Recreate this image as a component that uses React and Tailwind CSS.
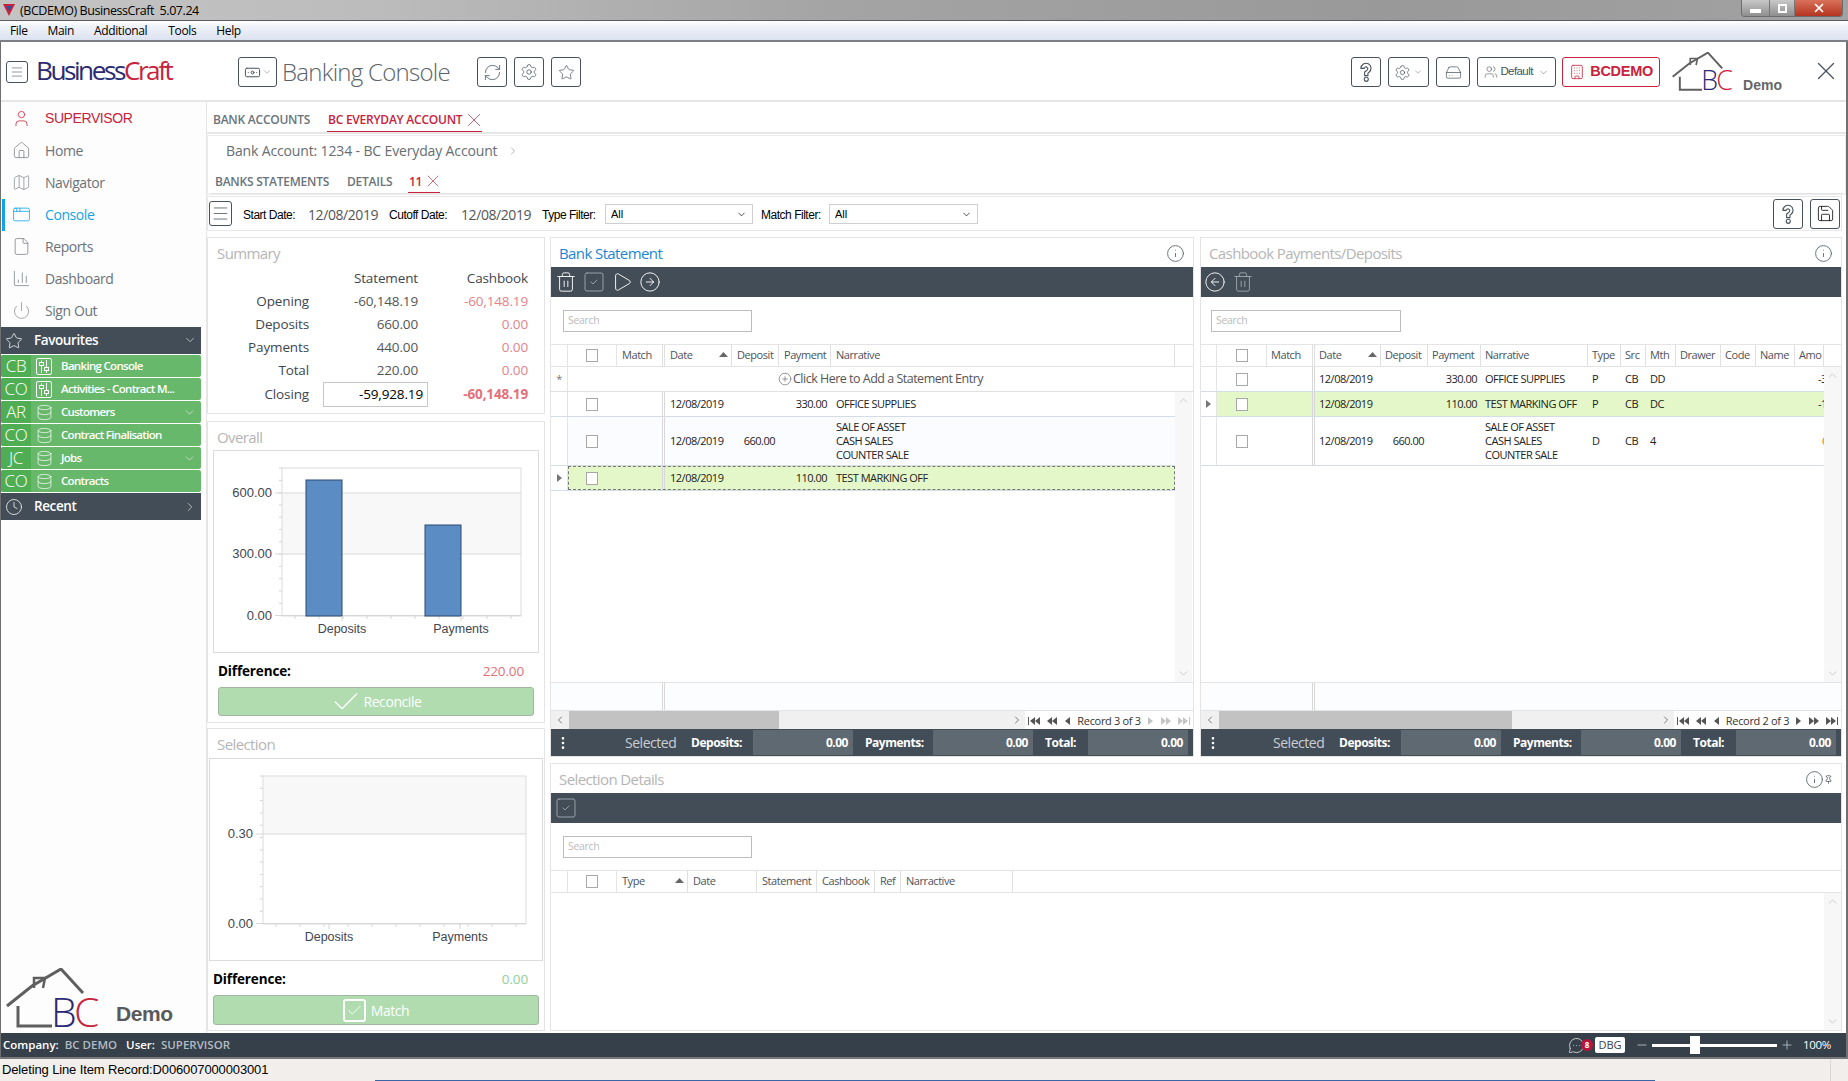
import React from 'react';
import { User, Home, Map, AppWindow, File, ChartColumn, Power, Star, Clock, Database, ChevronDown, ChevronRight, ChevronLeft, ChevronUp, RefreshCw, Settings, Users, Building, HardDrive, Save, X, Info, Trash2, SquareCheck, Play, CircleArrowRight, CircleArrowLeft, Pin, Check, Menu, Banknote, CirclePlus, MessageCircleMore, Plus, Minus, EllipsisVertical } from 'lucide-react';

const QMark = ({ c = 'w-[22px] h-[22px]' }) => (
  <svg viewBox="0 0 24 24" className={c} fill="none" stroke="#47525c" strokeWidth="1.2">
    <path d="M6.5 8a5.5 5.5 0 1 1 8.6 4.5l-1 .8V16h-3.6v-4l2.2-1.7A2 2 0 1 0 10 8z" />
    <circle cx="12.3" cy="20" r="2.2" />
  </svg>
);

const Sliders = () => (
  <svg width="12" height="13" viewBox="0 0 12 13" fill="none" stroke="currentColor" strokeWidth="1">
    <path d="M3.5 0.5V13M8.5 0V13" />
    <rect x="1.5" y="2.5" width="4" height="3" fill="#68b86b" />
    <rect x="6.5" y="7.5" width="4" height="3" fill="#68b86b" />
  </svg>
);

function Logo({ w, h, cn = '' }) {
  return (
    <svg width={w} height={h} viewBox="0 0 92 72" fill="none" className={cn}>
      <path d="M1 38 L26 18 L55 1 L77 25" stroke="#5f5f5f" strokeWidth="3" fill="none" />
      <path d="M28 20 V10 H39 L37 20" stroke="#5f5f5f" strokeWidth="2.5" fill="none" />
      <path d="M12 38 V58 H46" stroke="#5f5f5f" strokeWidth="3" fill="none" />
      <text x="45" y="59" fontFamily="Open Sans" fontWeight="300" fontSize="41" fill="#2c2a72">B</text>
      <text x="68" y="59" fontFamily="Open Sans" fontWeight="300" fontSize="41" fill="#c8233c">C</text>
    </svg>
  );
}

const side = [
  [User, 'SUPERVISOR', 'text-[#c8233c] font-[\'Liberation_Sans\'] tracking-[-0.02em]', 'text-[#c8233c]'],
  [Home, 'Home', 'text-[#6b7278]', 'text-[#7c8287]'],
  [Map, 'Navigator', 'text-[#6b7278]', 'text-[#8c9196]'],
  [AppWindow, 'Console', 'text-[#10a5ea]', 'text-[#10a5ea]'],
  [File, 'Reports', 'text-[#6b7278]', 'text-[#7c8287]'],
  [ChartColumn, 'Dashboard', 'text-[#6b7278]', 'text-[#7c8287]'],
  [Power, 'Sign Out', 'text-[#6b7278]', 'text-[#8c9196]'],
];

const favs = [
  ['CB', null, 'Banking Console', false],
  ['CO', null, 'Activities - Contract M...', false],
  ['AR', Database, 'Customers', true],
  ['CO', Database, 'Contract Finalisation', false],
  ['JC', Database, 'Jobs', true],
  ['CO', Database, 'Contracts', false],
];

function Sidebar() {
  return (
    <aside className="w-[205px] shrink-0 flex flex-col bg-[#fdfdfe] pt-px">
      {side.map(([I, t, tc, ic]) => (
        <div key={t} className="h-[32px] pb-[2px] flex items-center relative">
          {t === 'Console' && <div className="absolute left-[1px] top-0 bottom-0 w-[3px] bg-[#10a5ea]" />}
          <div className="w-[40px] flex justify-center"><I size={19} strokeWidth={1} className={ic} /></div>
          <span className={`ml-[4px] text-[14px] tracking-[-0.03em] ${tc}`}>{t}</span>
        </div>
      ))}
      <div className="w-[200px] h-[27px] bg-[#434d58] flex items-center text-white">
        <div className="w-[26px] flex justify-center"><Star size={18} strokeWidth={1} /></div>
        <span className="ml-[7px] text-[13.5px] font-semibold tracking-[-0.03em] flex-1">Favourites</span>
        <ChevronDown size={14} strokeWidth={1} className="mr-[4px] mb-[2px]" />
      </div>
      {favs.map(([code, I, t, chev], i) => (
        <div key={i} className="w-[200px] h-[22px] mt-px flex items-center bg-[#68b86b] rounded-[2px] text-white overflow-hidden">
          <div className="w-[30px] h-full bg-[#4fae53] flex items-center justify-center text-[17px] font-light tracking-[-0.02em]">{code}</div>
          <div className="w-[26px] flex justify-center">
            {I ? <I size={17} strokeWidth={1} /> : <div className="w-[16px] h-[17px] border border-white rounded-[2px] flex items-center justify-center"><Sliders /></div>}
          </div>
          <span className="ml-[4px] text-[11.5px] font-semibold tracking-[-0.06em] flex-1 whitespace-nowrap">{t}</span>
          {chev && <ChevronDown size={13} strokeWidth={1} className="mr-[5px]" />}
        </div>
      ))}
      <div className="w-[200px] h-[27px] mt-px bg-[#434d58] flex items-center text-white">
        <div className="w-[26px] flex justify-center"><Clock size={18} strokeWidth={1} /></div>
        <span className="ml-[7px] text-[13.5px] font-semibold tracking-[-0.03em] flex-1">Recent</span>
        <ChevronRight size={14} strokeWidth={1} className="mr-[4px]" />
      </div>
      <div className="mt-auto mb-[5px] ml-[5px] flex items-end">
        <Logo w={92} h={72} cn="mb-[-12px]" />
        <span className="ml-[18px] mb-[-1px] text-[21px] font-bold text-[#5a5a5a] tracking-[-0.02em] font-['Liberation_Sans']">Demo</span>
      </div>
    </aside>
  );
}

const Btn = ({ w, red, children, cn = '' }) => (
  <div className={`h-[30px] ${w} border ${red ? 'border-[#c8233c]' : 'border-[#47525c]'} rounded-[3px] flex items-center justify-center shrink-0 ${cn}`}>{children}</div>
);

function Header() {
  return (
    <div className="h-[60px] pt-[2px] flex items-center border-b-2 border-[#e6e6e6] shrink-0 text-[#47525c]">
      <div className="ml-[5px] w-[22px] h-[22px] border border-[#47525c] rounded-[3px] flex items-center justify-center"><Menu size={14} strokeWidth={1} /></div>
      <div className="ml-[8px] w-[138px] text-[26.2px] leading-none tracking-[-0.095em] whitespace-nowrap mb-[3px]">
        <span className="text-[#2c2a72]">Business</span><span className="text-[#c8233c]">Craft</span>
      </div>
      <Btn w="w-[39px] ml-[64px] gap-[1px]">
        <Banknote size={17} strokeWidth={1.4} /><ChevronDown size={10} strokeWidth={1} />
      </Btn>
      <div className="ml-[5px] w-[170px] text-[24px] font-light text-[#5b6369] tracking-[-0.03em] whitespace-nowrap mb-[1px]">Banking Console</div>
      <Btn w="w-[30px] ml-[25px]"><RefreshCw size={19} strokeWidth={1} /></Btn>
      <Btn w="w-[30px] ml-[7px]"><Settings size={18} strokeWidth={1} /></Btn>
      <Btn w="w-[30px] ml-[7px]"><Star size={17} strokeWidth={1} /></Btn>
      <Btn w="w-[30px] ml-auto"><QMark /></Btn>
      <Btn w="w-[41px] ml-[7px] gap-[2px]"><Settings size={17} strokeWidth={1} /><ChevronDown size={10} strokeWidth={1} /></Btn>
      <Btn w="w-[34px] ml-[7px]"><HardDrive size={17} strokeWidth={1} /></Btn>
      <Btn w="w-[79px] ml-[7px] gap-[2px]"><Users size={14} strokeWidth={1} /><span className="text-[11.5px] tracking-[-0.05em] font-['Liberation_Sans']">Default</span><ChevronDown size={11} strokeWidth={1} className="ml-[3px]" /></Btn>
      <Btn red w="w-[98px] ml-[6px] gap-[5px] text-[#c8233c]"><Building size={16} strokeWidth={1.2} /><span className="text-[14.5px] font-bold tracking-[-0.02em] font-['Liberation_Sans']">BCDEMO</span></Btn>
      <div className="ml-[12px] mb-[1px] flex items-end">
        <Logo w={60} h={47} cn="mb-[-8px]" />
        <span className="ml-[11px] mb-[-5px] text-[14px] font-bold text-[#666] font-['Liberation_Sans']">Demo</span>
      </div>
      <X size={30} strokeWidth={1} className="ml-[29px] mr-[5px] mb-[2px] text-[#47525c]" />
    </div>
  );
}

const Sel = ({ w }) => (
  <div className={`${w} h-[20px] border border-[#cfcfcf] flex items-center pl-[5px] text-[11px] text-black font-['Liberation_Sans']`}>
    <span className="flex-1">All</span><ChevronDown size={11} strokeWidth={1.5} className="mr-[5px]" />
  </div>
);

function TopStrips() {
  return (
    <>
      <div className="h-[32px] border-b-2 border-[#e6e6e6] flex items-end shrink-0 pl-[6px] text-[12px] font-semibold tracking-[-0.02em] font-['Open_Sans']">
        <span className="h-[29px] w-[98px] leading-[34px] text-[#6a737b] whitespace-nowrap">BANK ACCOUNTS</span>
        <span className="h-[29px] ml-[16px] pl-[1px] w-[155px] border-b border-[#c8233c] flex items-start text-[#c8233c] whitespace-nowrap">
          <span className="leading-[34px] w-[135px] whitespace-nowrap">BC EVERYDAY ACCOUNT</span><X size={22} strokeWidth={0.8} className="ml-[1px] mt-[6px] shrink-0" />
        </span>
      </div>
      <div className="h-[60px] mt-px border border-[#ececec] shrink-0 flex flex-col">
        <div className="h-[29px] flex items-center pl-[18px] text-[14px] text-[#666d73] tracking-[-0.01em] whitespace-nowrap">
          Bank Account: 1234 - BC Everyday Account<ChevronRight size={12} strokeWidth={1} className="ml-[10px]" />
        </div>
        <div className="mx-[2px] flex-1 border-b border-[#e4e4e4] flex items-end pl-[5px] text-[12px] font-semibold tracking-[-0.02em]">
          <span className="h-[27px] leading-[31px] w-[115px] whitespace-nowrap text-[#6a737b]">BANKS STATEMENTS</span>
          <span className="h-[27px] leading-[31px] w-[45px] text-[#6a737b] ml-[17px]">DETAILS</span>
          <span className="h-[27px] ml-[16px] w-[32px] border-b border-[#c8233c] flex text-[#c8233c]">
            <span className="leading-[31px] ml-[1px]">11</span><X size={20} strokeWidth={0.8} className="ml-[1px] mt-[5px] shrink-0" />
          </span>
        </div>
      </div>
      <div className="h-[35px] mt-px mr-[4px] border border-[#e8e8e8] shrink-0 flex items-center">
        <div className="ml-[1px] w-[23px] h-[25px] border border-[#47525c] rounded-[3px] flex items-center justify-center text-[#47525c]"><Menu size={19} strokeWidth={1} /></div>
        <span className="ml-[11px] mt-[2px] w-[52px] text-[12px] tracking-[-0.04em] font-['Liberation_Sans'] text-black whitespace-nowrap">Start Date:</span>
        <span className="ml-[13px] mt-[2px] w-[71px] text-[14px] tracking-[-0.03em] text-[#555] whitespace-nowrap">12/08/2019</span>
        <span className="ml-[10px] mt-[2px] w-[58px] text-[12px] tracking-[-0.04em] font-['Liberation_Sans'] text-black whitespace-nowrap">Cutoff Date:</span>
        <span className="ml-[14px] mt-[2px] w-[71px] text-[14px] tracking-[-0.03em] text-[#555] whitespace-nowrap">12/08/2019</span>
        <span className="ml-[10px] mt-[2px] w-[54px] text-[12px] tracking-[-0.04em] font-['Liberation_Sans'] text-black whitespace-nowrap">Type Filter:</span>
        <div className="ml-[9px] mt-px"><Sel w="w-[148px]" /></div>
        <span className="ml-[8px] mt-[2px] w-[59px] text-[12px] tracking-[-0.04em] font-['Liberation_Sans'] text-black whitespace-nowrap">Match Filter:</span>
        <div className="ml-[9px] mt-px"><Sel w="w-[149px]" /></div>
        <div className="ml-auto mr-[1px] flex gap-[7px]">
          <Btn w="w-[30px]"><QMark /></Btn>
          <Btn w="w-[30px]"><Save size={19} strokeWidth={1} /></Btn>
        </div>
      </div>
    </>
  );
}

function ChartBox({ plotL, plotR, bars, labels, lines, cn, w }) {
  const T = 17, B = 165;
  const ticks = [];
  for (let y = T; y < B; y += 12.3) ticks.push(y);
  const bt = [];
  for (let x = plotL + 13; x < plotR; x += 24) bt.push(x);
  return (
    <div className={cn}>
      <svg width={w} height="201" fontFamily="Liberation Sans" fontSize="12.5" fill="#3f4650">
        {bars && <rect x={plotL} y={lines[0].y} width={plotR - plotL} height={lines[1].y - lines[0].y} fill="#f8f8f8" />}
        {!bars && <rect x={plotL} y={T} width={plotR - plotL} height={lines[0].y - T} fill="#f8f8f8" />}
        <rect x={plotL} y={T} width={plotR - plotL} height={B - T} fill="none" stroke="#dcdcdc" />
        {ticks.map((y, i) => <line key={i} x1={plotL - 3} x2={plotL} y1={y} y2={y} stroke="#d4d4d4" />)}
        {bt.map((x, i) => <line key={i} x1={x} x2={x} y1={B} y2={B + 3} stroke="#d4d4d4" />)}
        {lines.map((l) => (
          <g key={l.t}>
            <line x1={plotL - 7} x2={plotR} y1={l.y} y2={l.y} stroke="#d8d8d8" />
            <text x={plotL - 10} y={l.y + 4} textAnchor="end" fontSize="13">{l.t}</text>
          </g>
        ))}
        {bars && bars.map((b) => <rect key={b.x} x={b.x} y={b.y} width="36" height={B - b.y} fill="#5b8cc4" stroke="#2a4a72" strokeWidth="1" />)}
        {labels.map((l) => (
          <g key={l.t}>
            <line x1={l.x} x2={l.x} y1={B} y2={B + 5} stroke="#d4d4d4" />
            <text x={l.x} y={B + 17} textAnchor="middle">{l.t}</text>
          </g>
        ))}
      </svg>
    </div>
  );
}

const sumRows = [
  ['Opening', '-60,148.19', '-60,148.19'],
  ['Deposits', '660.00', '0.00'],
  ['Payments', '440.00', '0.00'],
  ['Total', '220.00', '0.00'],
];

function LeftColumn() {
  return (
    <div className="w-[338px] shrink-0 flex flex-col text-[#3e464d]">
      <div className="h-[177px] border border-[#e4e4e4] bg-white">
        <div className="h-[29px] pt-[2px] pl-[9px] flex items-center text-[15px] text-[#b5b5b5] tracking-[-0.04em]">Summary</div>
        <div className="grid grid-cols-[101px_109px_110px] grid-rows-[23px_23px_23px_23px_23px_25px] text-[13.5px] tracking-[-0.01em] items-center text-right">
          <span />
          <span className="font-medium">Statement</span>
          <span className="font-medium">Cashbook</span>
          {sumRows.map((r) => (
            <React.Fragment key={r[0]}>
              <span className="font-medium">{r[0]}</span>
              <span className="text-[#555]">{r[1]}</span>
              <span className="text-[#e4838b]">{r[2]}</span>
            </React.Fragment>
          ))}
          <span className="font-medium">Closing</span>
          <span className="ml-[14px] mr-[-10px] h-[25px] border border-[#c8c8c8] pr-[4px] flex items-center justify-end text-black font-medium">-59,928.19</span>
          <span className="font-bold text-[#e4707a]">-60,148.19</span>
        </div>
      </div>
      <div className="h-[302px] mt-[7px] border border-[#e4e4e4] bg-white flex flex-col">
        <div className="h-[28px] pt-[2px] pl-[9px] flex items-center text-[15px] text-[#b5b5b5] tracking-[-0.04em]">Overall</div>
        <ChartBox cn="mx-[5px] h-[203px] border border-[#dcdcdc]" w={324} plotL={68} plotR={307}
          bars={[{ x: 92, y: 29 }, { x: 211, y: 74 }]}
          lines={[{ y: 42, t: '600.00' }, { y: 103, t: '300.00' }, { y: 164.5, t: '0.00' }]}
          labels={[{ x: 128, t: 'Deposits' }, { x: 247, t: 'Payments' }]} />
        <div className="h-[34px] pt-[3px] flex items-center pl-[10px] pr-[20px] justify-between text-[13.5px] tracking-[-0.01em]">
          <span className="font-bold text-black">Difference:</span><span className="text-[#e4707a] font-medium">220.00</span>
        </div>
        <div className="mx-[10px] h-[29px] bg-[#b0dcb0] border border-[#a3b5a3] rounded-[3px] flex items-center justify-center text-white text-[14px] gap-[1px] tracking-[-0.03em]">
          <Check size={32} strokeWidth={1} />Reconcile
        </div>
      </div>
      <div className="h-[303px] mt-[5px] border border-[#e4e4e4] bg-white flex flex-col">
        <div className="h-[29px] pt-[2px] pl-[9px] flex items-center text-[15px] text-[#b5b5b5] tracking-[-0.04em]">Selection</div>
        <ChartBox cn="mx-[1px] h-[203px] border-y border-x border-[#dcdcdc]" w={334} plotL={53} plotR={316}
          lines={[{ y: 75, t: '0.30' }, { y: 164.5, t: '0.00' }]}
          labels={[{ x: 119, t: 'Deposits' }, { x: 250, t: 'Payments' }]} />
        <div className="h-[34px] pt-[3px] flex items-center pl-[5px] pr-[16px] justify-between text-[13.5px] tracking-[-0.01em]">
          <span className="font-bold text-black">Difference:</span><span className="text-[#8fd096] font-medium">0.00</span>
        </div>
        <div className="ml-[5px] w-[326px] h-[30px] bg-[#b0dcb0] border border-[#a3b5a3] rounded-[3px] flex items-center justify-center text-white text-[14px] gap-[5px] tracking-[-0.03em]">
          <div className="w-[23px] h-[23px] border-2 border-white rounded-[3px] flex items-center justify-center"><Check size={17} strokeWidth={1.3} /></div>Match
        </div>
      </div>
    </div>
  );
}

const Box = () => <div className="w-[12px] h-[13px] border border-[#a8a8a8] bg-white" />;

const Tri = ({ dir = 'r', c = '#555' }) => (
  <svg width="5" height="8" viewBox="0 0 5 8"><path d={dir === 'r' ? 'M0 0 L5 4 L0 8z' : 'M5 0 L0 4 L5 8z'} fill={c} /></svg>
);

function Pager({ text, dim }) {
  const a = '#555';
  const b = dim ? '#c4c4c4' : '#555';
  return (
    <div className="flex-1 h-full pt-[2px] bg-white flex items-center justify-between px-[3px] text-[11px] tracking-[-0.03em] text-[#333]">
      <span className="flex items-center"><span className="w-px h-[8px] mr-px bg-[#555]" /><Tri dir="l" c={a} /><Tri dir="l" c={a} /></span>
      <span className="flex items-center"><Tri dir="l" c={a} /><Tri dir="l" c={a} /></span>
      <Tri dir="l" c={a} />
      <span className="whitespace-nowrap">{text}</span>
      <Tri c={b} />
      <span className="flex items-center"><Tri c={b} /><Tri c={b} /></span>
      <span className="flex items-center"><Tri c={b} /><Tri c={b} /><span className="w-px h-[8px] ml-px" style={{ background: b }} /></span>
    </div>
  );
}

function SelectedBar({ cols }) {
  return (
    <div className="h-[27px] bg-[#434d58] flex items-center text-white text-[12px] font-bold tracking-[-0.04em] shrink-0">
      <EllipsisVertical size={16} strokeWidth={2} className="ml-[4px] w-[16px]" />
      <span className={`${cols.sel} text-[14px] font-normal text-[#c9ced2] whitespace-nowrap`}>Selected</span>
      <span className={cols.d}>Deposits:</span>
      <div className={`${cols.b1} h-[25px] bg-[#5f6971] flex items-center justify-end pr-[5px]`}>0.00</div>
      <span className={cols.p}>Payments:</span>
      <div className={`${cols.b2} h-[25px] bg-[#5f6971] flex items-center justify-end pr-[5px]`}>0.00</div>
      <span className={cols.t}>Total:</span>
      <div className={`${cols.b3} h-[25px] bg-[#5f6971] flex items-center justify-end pr-[5px]`}>0.00</div>
    </div>
  );
}

const Title = ({ children, blue, pin }) => (
  <div className="h-[29px] pt-[2px] shrink-0 flex items-center pl-[8px] pr-[8px] justify-between">
    <span className={`text-[15px] tracking-[-0.04em] ${blue ? 'text-[#1c86d6]' : 'text-[#b5b5b5]'}`}>{children}</span>
    <span className="flex items-center text-[#47525c]"><Info size={19} strokeWidth={1} />{pin && <Pin size={9} strokeWidth={2} />}</span>
  </div>
);

const bankCols = [
  { w: 'w-[48px]', t: 'Match', db: true },
  { w: 'w-[67px]', t: 'Date', sort: true },
  { w: 'w-[47px]', t: 'Deposit', right: true },
  { w: 'w-[52px]', t: 'Payment', right: true },
  { w: 'w-[344px]', t: 'Narrative' },
];
const cashCols = [
  { w: 'w-[48px]', t: 'Match', db: true },
  { w: 'w-[66px]', t: 'Date', sort: true },
  { w: 'w-[47px]', t: 'Deposit', right: true },
  { w: 'w-[53px]', t: 'Payment', right: true },
  { w: 'w-[107px]', t: 'Narrative' },
  { w: 'w-[33px]', t: 'Type' },
  { w: 'w-[25px]', t: 'Src' },
  { w: 'w-[30px]', t: 'Mth' },
  { w: 'w-[45px]', t: 'Drawer' },
  { w: 'w-[35px]', t: 'Code' },
  { w: 'w-[39px]', t: 'Name' },
  { w: 'w-[29px]', t: 'Amo', amo: true },
];
const detCols = [
  { w: 'w-[71px]', t: 'Type', sort: true },
  { w: 'w-[69px]', t: 'Date' },
  { w: 'w-[60px]', t: 'Statement' },
  { w: 'w-[58px]', t: 'Cashbook' },
  { w: 'w-[26px]', t: 'Ref' },
  { w: 'w-[112px]', t: 'Narractive' },
];

function HeadRow({ cols, ind = 'w-[17px]', chk = 'w-[49px]', pl = 'pl-[5px]' }) {
  return (
    <div className="h-[23px] shrink-0 flex border-y border-[#e4e4e4] text-[11px] tracking-[-0.04em] text-[#4c5359]">
      <div className={`${ind} border-r border-[#e4e4e4]`} />
      <div className={`${chk} border-r border-[#e4e4e4] flex items-center justify-center`}><Box /></div>
      {cols.map((c) => (
        <div key={c.t} className={`${c.w} shrink-0 overflow-hidden whitespace-nowrap flex items-center ${pl} ${c.db ? 'border-r-[3px] border-double' : 'border-r'} border-[#e0e0e0]`}>
          <span className="flex-1">{c.t}</span>
          {c.sort && <svg width="9" height="5" viewBox="0 0 9 5" className="mr-[3px] mb-[3px]"><path d="M0 5 L4.5 0 L9 5z" fill="#666" /></svg>}
        </div>
      ))}
    </div>
  );
}

function DataRow({ cols, vals, h, active, outline, alt, ind = 'w-[17px]', chk = 'w-[49px]', pl = 'pl-[5px]' }) {
  return (
    <div className={`${h} shrink-0 flex border-b border-[#d4dde6] text-[11px] tracking-[-0.045em] text-[#222] ${active ? 'bg-[#e4f7c8]' : alt ? 'bg-[#fbfcff]' : 'bg-white'}`}>
      <div className={`${ind} border-r border-[#e4e4e4] bg-white flex items-center justify-center`}>{(active || outline) && <Tri c="#777" />}</div>
      <div className={`flex flex-1 min-w-0 ${outline ? 'outline-1 outline-dashed outline-[#777] -outline-offset-1' : ''}`}>
        <div className={`${chk} border-r border-transparent flex items-center justify-center`}><Box /></div>
        {cols.map((c, i) => (
          <div key={c.t} className={`${c.w} shrink-0 overflow-hidden whitespace-nowrap flex items-center ${c.right ? 'justify-end pr-[4px]' : pl} ${c.db ? 'border-r-[3px] border-double border-[#d8d8d8]' : ''}`}>
            {c.amo ? <span className={`${vals[i] === '6' ? 'pl-[23px] text-orange-500' : 'pl-[19px]'}`}>{vals[i]}</span> : Array.isArray(vals[i]) ? <div className="leading-[14px]">{vals[i].map((l) => <div key={l}>{l}</div>)}</div> : vals[i]}
          </div>
        ))}
      </div>
    </div>
  );
}

const Scroll = ({ cn = '' }) => (
  <div className={`w-[17px] shrink-0 bg-[#f7f7f7] flex flex-col items-center justify-between py-[2px] text-[#c4c4c4] ${cn}`}>
    <ChevronUp size={13} strokeWidth={1.5} /><ChevronDown size={13} strokeWidth={1.5} />
  </div>
);

const Search = ({ w, pl = 'pl-[12px]' }) => (
  <div className={`h-[47px] pt-px shrink-0 flex items-center ${pl}`}>
    <div className={`${w} h-[22px] border border-[#bdbdbd] pl-[4px] flex items-center text-[10.5px] text-[#bbb] tracking-[-0.03em]`}>Search</div>
  </div>
);

const sale = ['SALE OF ASSET', 'CASH SALES', 'COUNTER SALE'];

function Footer({ ind, chk }) {
  return (
    <div className="h-[29px] shrink-0 flex border-y border-[#e4e4e4] bg-[#fcfdff]">
      <div className={ind} /><div className={chk} />
      <div className="w-[48px] border-r-[3px] border-double border-[#d8d8d8]" />
    </div>
  );
}

const barCols = (ml) => ({ sel: `${ml} w-[66px]`, d: 'w-[62px]', b1: 'w-[100px]', p: 'ml-[12px] w-[68px]', b2: 'w-[100px]', t: 'ml-[12px] w-[43px]', b3: 'w-[100px]' });

function BankPanel() {
  return (
    <div className="w-[644px] shrink-0 border border-[#e4e4e4] bg-white flex flex-col">
      <Title blue>Bank Statement</Title>
      <div className="h-[30px] shrink-0 bg-[#434d58] flex items-center pl-[4px] text-white">
        <Trash2 size={22} strokeWidth={1} /><SquareCheck size={24} strokeWidth={0.9} className="ml-[5px] text-[#a0a8ae]" /><Play size={22} strokeWidth={1} className="ml-[5px]" /><CircleArrowRight size={22} strokeWidth={1} className="ml-[6px]" />
      </div>
      <Search w="w-[189px]" />
      <HeadRow cols={bankCols} />
      <div className="h-[25px] shrink-0 flex border-b border-[#e0e0e0] text-[12.5px] tracking-[-0.04em] text-[#555]">
        <div className="w-[17px] border-r border-[#e4e4e4] flex items-center justify-center text-[11px] text-[#777]">*</div>
        <div className="flex-1 flex items-center justify-center gap-[1px]"><CirclePlus size={14} strokeWidth={1} />Click Here to Add a Statement Entry</div>
      </div>
      <div className="flex-1 flex min-h-0">
        <div className="flex-1 min-w-0 flex flex-col">
          <DataRow h="h-[25px]" cols={bankCols} vals={['', '12/08/2019', '', '330.00', 'OFFICE SUPPLIES']} />
          <DataRow h="h-[49px]" alt cols={bankCols} vals={['', '12/08/2019', '660.00', '', sale]} />
          <DataRow h="h-[25px]" outline active cols={bankCols} vals={['', '12/08/2019', '', '110.00', 'TEST MARKING OFF']} />
        </div>
        <Scroll cn="mr-[1px]" />
      </div>
      <Footer ind="w-[17px]" chk="w-[49px]" />
      <div className="h-[18px] shrink-0 flex items-center bg-[#f0f0f0]">
        <ChevronLeft size={12} strokeWidth={1.5} className="w-[18px] text-[#555]" />
        <div className="w-[210px] h-full bg-[#c2c2c2]" />
        <div className="w-[246px] flex justify-end pr-[2px]"><ChevronRight size={12} strokeWidth={1.5} className="text-[#555]" /></div>
        <Pager text="Record 3 of 3" dim />
      </div>
      <SelectedBar cols={barCols('ml-[54px]')} />
    </div>
  );
}

function CashPanel() {
  const o = { ind: 'w-[16px]', chk: 'w-[50px]', pl: 'pl-[4px]' };
  return (
    <div className="w-[642px] shrink-0 ml-[6px] border border-[#e4e4e4] bg-white flex flex-col">
      <Title>Cashbook Payments/Deposits</Title>
      <div className="h-[30px] shrink-0 bg-[#434d58] flex items-center pl-[3px] text-white">
        <CircleArrowLeft size={22} strokeWidth={1} /><Trash2 size={22} strokeWidth={1} className="ml-[6px] text-[#a0a8ae]" />
      </div>
      <Search w="w-[190px]" pl="pl-[10px]" />
      <HeadRow cols={cashCols} {...o} />
      <div className="flex-1 flex min-h-0">
        <div className="flex-1 min-w-0 flex flex-col">
          <DataRow h="h-[25px]" {...o} cols={cashCols} vals={['', '12/08/2019', '', '330.00', 'OFFICE SUPPLIES', 'P', 'CB', 'DD', '', '', '', '-330']} />
          <DataRow h="h-[25px]" {...o} active cols={cashCols} vals={['', '12/08/2019', '', '110.00', 'TEST MARKING OFF', 'P', 'CB', 'DC', '', '', '', '-110']} />
          <DataRow h="h-[49px]" {...o} cols={cashCols} vals={['', '12/08/2019', '660.00', '', sale, 'D', 'CB', '4', '', '', '', '6']} />
        </div>
        <Scroll />
      </div>
      <Footer ind={o.ind} chk={o.chk} />
      <div className="h-[18px] shrink-0 flex items-center bg-[#f0f0f0]">
        <ChevronLeft size={12} strokeWidth={1.5} className="w-[18px] text-[#555]" />
        <div className="w-[293px] h-full bg-[#c2c2c2]" />
        <div className="w-[162px] flex justify-end pr-[2px]"><ChevronRight size={12} strokeWidth={1.5} className="text-[#555]" /></div>
        <Pager text="Record 2 of 3" />
      </div>
      <SelectedBar cols={barCols('ml-[52px]')} />
    </div>
  );
}

function DetailsPanel() {
  return (
    <div className="flex-1 min-h-0 mt-[6px] mr-[4px] border border-[#e4e4e4] bg-white flex flex-col">
      <Title pin>Selection Details</Title>
      <div className="h-[30px] shrink-0 bg-[#434d58] flex items-center pl-[3px] text-[#a0a8ae]">
        <SquareCheck size={24} strokeWidth={0.9} />
      </div>
      <Search w="w-[189px]" />
      <div className="shrink-0"><HeadRow cols={detCols} /></div>
      <div className="flex-1 flex justify-end"><Scroll /></div>
    </div>
  );
}

function StatusBar() {
  return (
    <div className="h-[24px] bg-[#36404a] flex items-center text-[11.5px] font-semibold tracking-[0em] shrink-0">
      <span className="ml-[2px] text-white">Company:</span>
      <span className="ml-[6px] text-[#b3bcc4]">BC DEMO</span>
      <span className="ml-[9px] text-white">User:</span>
      <span className="ml-[6px] text-[#b3bcc4]">SUPERVISOR</span>
      <div className="ml-auto flex items-center text-white relative">
        <MessageCircleMore size={17} strokeWidth={1} />
        <span className="w-[12px] h-[12px] rounded-full bg-[#b8163f] ml-[-4px] flex items-center justify-center text-[8px] font-bold leading-none">8</span>
        <span className="ml-[2px] w-[30px] h-[16px] bg-white rounded-[2px] text-[#36404a] font-normal text-[11px] flex items-center justify-center tracking-normal">DBG</span>
        <Minus size={14} strokeWidth={1} className="ml-[10px]" />
        <div className="ml-[3px] w-[125px] h-[3px] bg-white relative">
          <div className="absolute left-[38px] top-[-8px] w-[10px] h-[18px] bg-white" />
        </div>
        <Plus size={14} strokeWidth={1.5} className="ml-[3px] text-[#b3bcc4]" />
        <span className="ml-[9px] mr-[17px] text-[11.5px] font-normal w-[26px] whitespace-nowrap tracking-[-0.03em]">100%</span>
      </div>
    </div>
  );
}

export default function App() {
  return (
    <div className="w-[1848px] h-[1081px] overflow-hidden flex flex-col bg-white font-['Open_Sans',sans-serif] relative">
      <div className="h-[21px] shrink-0 flex items-start bg-[linear-gradient(90deg,#c4c4c4_0%,#bcbcbc_20%,#a4a4a4_45%,#999_75%,#a2a2a2_100%)] border-b border-[#5b5b5b]">
        <svg width="14" height="14" viewBox="0 0 14 14" className="ml-[2px] mt-[3px]"><path d="M1 1 H13 L7 13z" fill="#c8233c" /><path d="M4 3 H10 L7 8z" fill="#2c4fa8" /></svg>
        <span className="ml-[4px] mt-[2px] text-[12.5px] text-black font-['Open_Sans'] tracking-[-0.035em] whitespace-pre">(BCDEMO) BusinessCraft  5.07.24</span>
        <div className="ml-auto mr-[5px] h-[17px] flex rounded-b-[4px] overflow-hidden border border-t-0 border-[#6b6b6b]">
          <div className="w-[28px] bg-[linear-gradient(#c8c8c8,#8f8f8f)] border-r border-[#777] flex items-center justify-center"><div className="w-[11px] h-[4px] bg-white mt-[5px]" /></div>
          <div className="w-[25px] bg-[linear-gradient(#c8c8c8,#8f8f8f)] border-r border-[#777] flex items-center justify-center"><div className="w-[9px] h-[9px] border-2 border-white" /></div>
          <div className="w-[47px] bg-[linear-gradient(#d9715a,#b5351f)] flex items-center justify-center"><X size={14} strokeWidth={3} className="text-white" /></div>
        </div>
      </div>
      <div className="h-[21px] pt-px shrink-0 flex items-center bg-[linear-gradient(#fff,#f0f3f9_25%,#dbe2f0)] border-b-2 border-[#7b7f85] text-[12px] text-black tracking-[-0.03em]">
        <span className="ml-[10px]">File</span><span className="ml-[20px]">Main</span><span className="ml-[20px]">Additional</span><span className="ml-[21px]">Tools</span><span className="ml-[20px]">Help</span>
      </div>
      <div className="flex-1 min-h-0 flex flex-col border-l border-r-2 border-[#707070]">
        <Header />
        <div className="flex-1 min-h-0 flex">
          <Sidebar />
          <main className="flex-1 min-w-0 flex flex-col border-l border-[#e6e6e6] pb-[2px]">
            <TopStrips />
            <div className="flex-1 min-h-0 flex mt-[6px]">
              <LeftColumn />
              <div className="ml-[5px] flex-1 min-w-0 flex flex-col">
                <div className="h-[520px] shrink-0 flex"><BankPanel /><CashPanel /></div>
                <DetailsPanel />
              </div>
            </div>
          </main>
        </div>
        <StatusBar />
      </div>
      <div className="h-[24px] shrink-0 bg-[#f1eeec] border-t-2 border-[#777] flex items-center pl-[2px] text-[13px] tracking-[-0.01em] font-['Liberation_Sans'] text-black relative">
        Deleting Line Item Record:D006007000003001
        <div className="absolute left-[375px] w-[1280px] bottom-0 h-px bg-[#3a66a8]" />
        <div className="absolute left-[1830px] top-0 bottom-0 w-px bg-[#dcd8d6]" />
      </div>
    </div>
  );
}
